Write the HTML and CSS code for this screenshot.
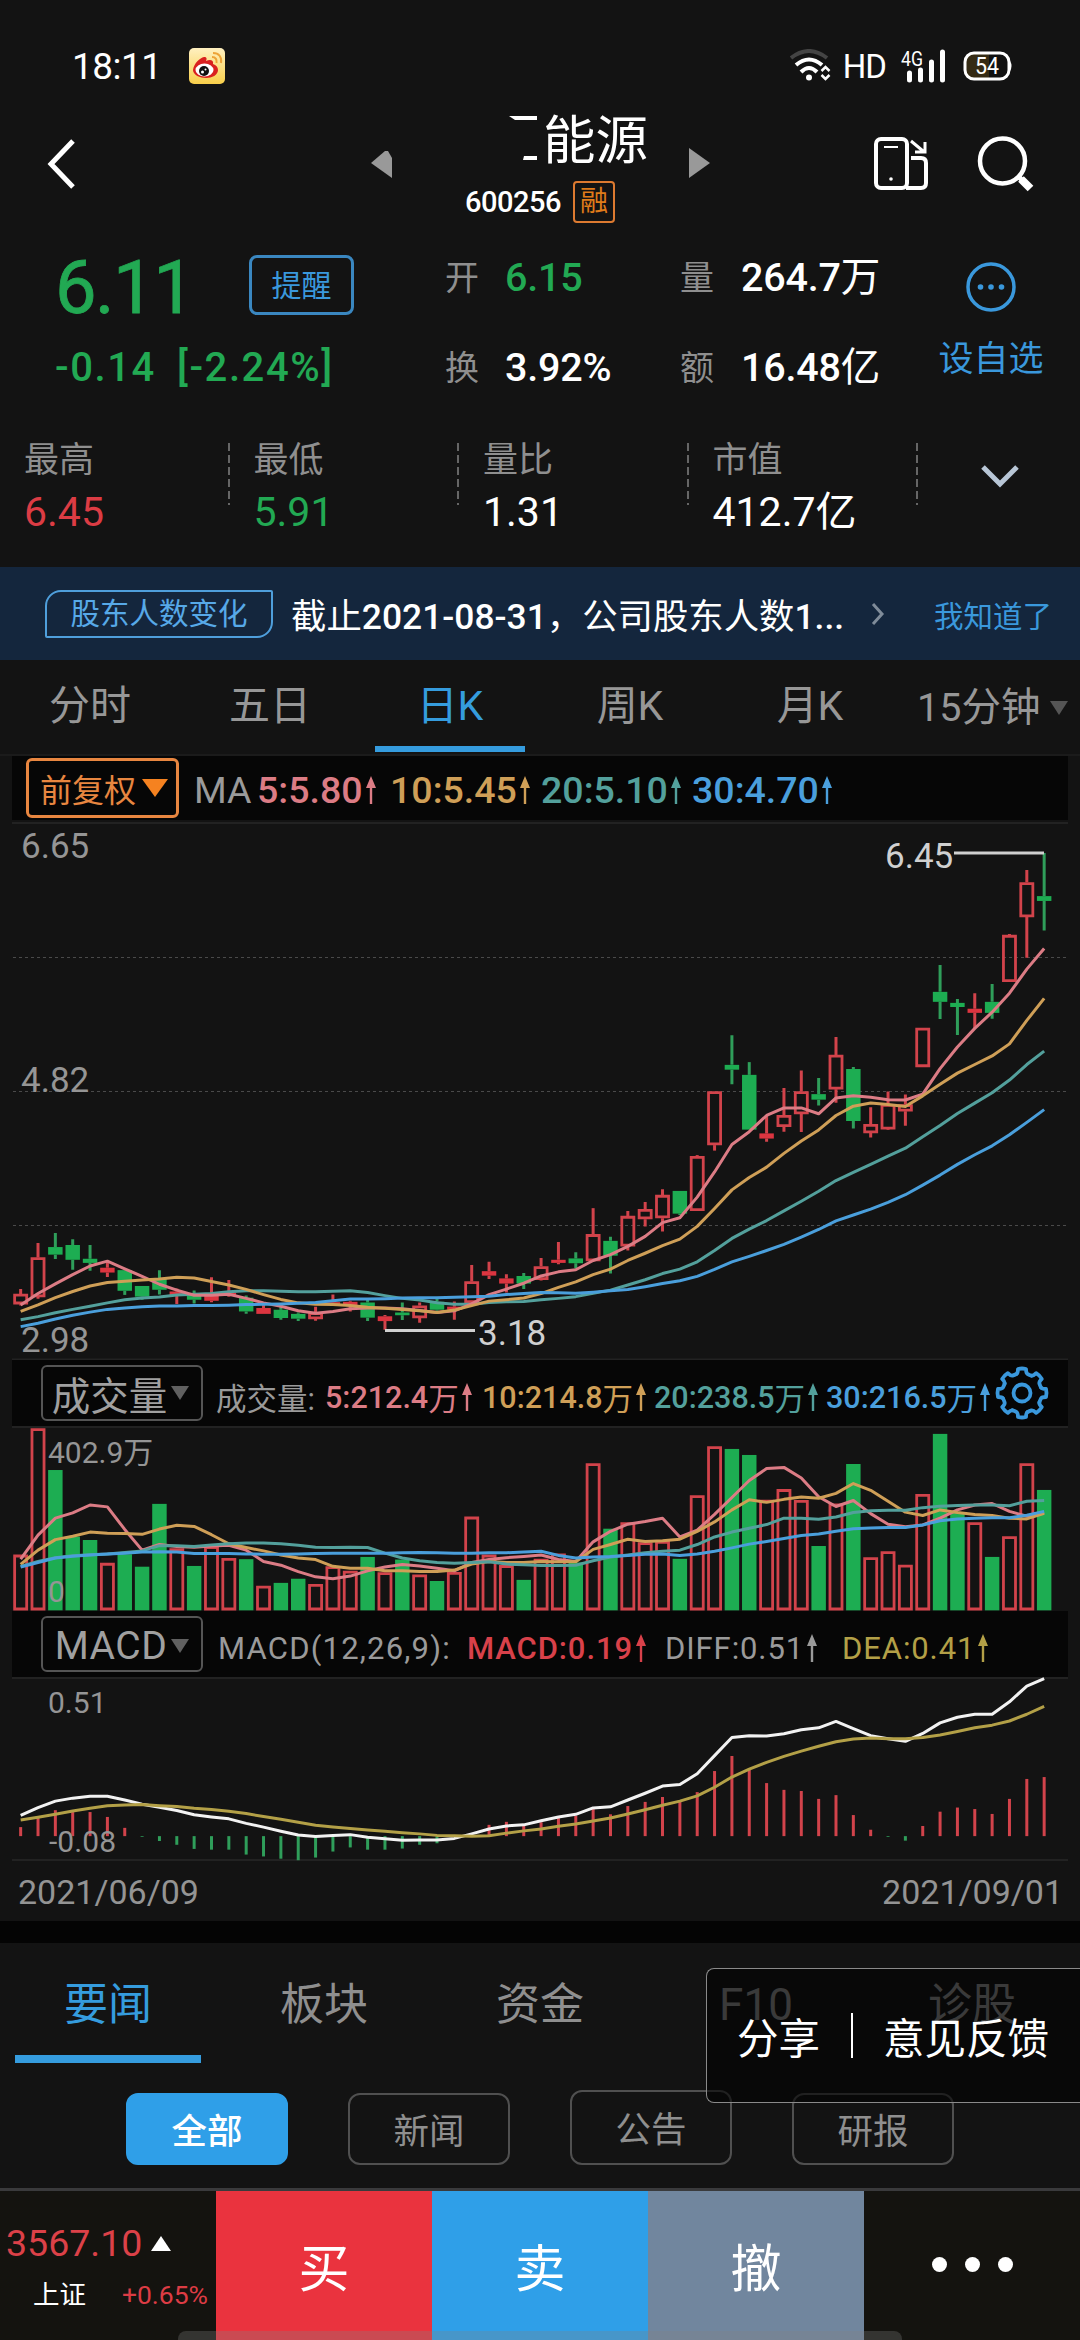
FILE: index.html
```html
<!DOCTYPE html>
<html lang="zh-CN">
<head>
  <meta charset="utf-8">
  <title>能源 600256</title>
  <link rel="stylesheet" href="styles.css">
</head>
<body>
  <div class="status">
    <span class="time">18:11</span>
    <svg class="weibo" width="36" height="36" viewBox="0 0 36 36">
      <defs><linearGradient id="wb" x1="0" y1="0" x2="0" y2="1"><stop offset="0" stop-color="#fff0c0"/><stop offset="1" stop-color="#f8cf4a"/></linearGradient></defs>
      <rect width="36" height="36" rx="5" fill="url(#wb)"/>
      <path d="M4 22C5 15 11 10 15 9c3 0 3 2 2 4 4-2 8-1 7 3 3 1 5 3 5 6 0 5-6 8-12 8S4 27 4 22z" fill="#d9201f"/>
      <ellipse cx="15.500" cy="22" rx="9" ry="6.500" fill="#fff"/>
      <circle cx="15" cy="23" r="5" fill="#111"/>
      <circle cx="13.500" cy="24" r="1.500" fill="#fff"/>
      <circle cx="16.500" cy="21.500" r="1" fill="#fff"/>
      <path d="M23 9c4 0 5 3 4.500 6M24 5c6 0 9 4 8 10" fill="none" stroke="#eda338" stroke-width="2"/>
    </svg>
    <span class="grow"></span>
    <svg width="42" height="34" viewBox="0 0 42 34" fill="none" stroke="#fff" stroke-width="4">
      <path d="M1 9Q19-5 37 9" stroke="#444"/>
      <path d="M6 16Q19 5 32 16M11 23Q19 15 27 23"/>
      <circle cx="19" cy="28.500" r="3" fill="#fff" stroke="none"/>
      <path d="M31.500 22l4-4 4 4M31.500 26l4 4 4-4" stroke-width="2.500"/>
    </svg>
    <span class="hd">HD</span>
    <svg class="signal" width="46" height="34" viewBox="0 0 46 34">
      <text x="0" y="17" class="net" textLength="22" lengthAdjust="spacingAndGlyphs">4G</text>
      <path d="M8.500 24v7M19.500 21v10M30.500 13v18M41.500 3v28" stroke="#fff" stroke-width="5" stroke-linecap="round"/>
    </svg>
    <svg class="battery" width="50" height="30" viewBox="0 0 50 30">
      <rect x="2" y="2" width="44" height="26" rx="9" fill="#111"/>
      <path d="M26 2H11a9 9 0 0 0-9 9v8a9 9 0 0 0 9 9h15z" fill="#352b14"/>
      <rect x="2" y="2" width="44" height="26" rx="9" fill="none" stroke="#fff" stroke-width="3"/>
      <path d="M47 10q3 5 0 10z" fill="#fff"/>
      <text x="24" y="23" text-anchor="middle" class="pct" textLength="24" lengthAdjust="spacingAndGlyphs">54</text>
    </svg>
  </div>

  <div class="header">
    <svg class="back" width="30" height="54" viewBox="0 0 30 54"><path d="M27 4L5 27l22 23" fill="none" stroke="#fff" stroke-width="5"/></svg>
    <svg class="prev" width="24" height="32" viewBox="0 0 24 32"><path d="M1 15L15 3l3 0 4 7v20z" fill="#999"/></svg>
    <div class="title">
      <div class="name">
        <svg width="30" height="52" viewBox="0 0 30 52"><path d="M0 5h28v4H6zM15 45h13v4H14z" fill="#fff"/></svg><span>能源</span>
      </div>
      <div class="code"><span>600256</span><i>融</i></div>
    </div>
    <svg class="next" width="24" height="32" viewBox="0 0 24 32"><path d="M1 1l21 15L1 31z" fill="#999"/></svg>
    <svg class="rotate" width="58" height="56" viewBox="0 0 58 56" fill="none" stroke="#fff" stroke-width="4">
      <rect x="4" y="3" width="31" height="49" rx="5"/>
      <path d="M12 11h14" stroke-width="2"/>
      <circle cx="19" cy="43" r="1.800" fill="#fff" stroke="none"/>
      <path d="M39 22h10q5 0 5 5v20q0 5-5 5H34"/>
      <path d="M39 5l12 10M53 6v10H43" stroke-width="3"/>
    </svg>
    <svg class="search" width="58" height="58" viewBox="0 0 58 58" fill="none" stroke="#fff">
      <circle cx="25.500" cy="25" r="22.500" stroke-width="4.500"/>
      <path d="M41 40l5 5" stroke-width="5"/>
      <path d="M44 43l9.500 9.500" stroke-width="8"/>
    </svg>
  </div>

  <div class="quote">
    <div class="price down">6.11</div>
    <div class="remind">提醒</div>
    <div class="label">开</div><div class="val down">6.15</div>
    <div class="label">量</div><div class="val">264.7<i>万</i></div>
    <div class="fav">
      <svg width="52" height="52" viewBox="0 0 52 52"><circle cx="26" cy="26" r="23" fill="none" stroke="#3a98dc" stroke-width="3.500"/><g fill="#3a98dc"><circle cx="15.500" cy="26" r="2.800"/><circle cx="26" cy="26" r="2.800"/><circle cx="36.500" cy="26" r="2.800"/></g></svg>
      <span>设自选</span>
    </div>
    <div class="change down"><span>-0.14</span><span>[-2.24%]</span></div>
    <div class="label">换</div><div class="val">3.92%</div>
    <div class="label">额</div><div class="val">16.48<i>亿</i></div>
  </div>

  <div class="stats">
    <div class="stat"><span>最高</span><b class="up">6.45</b></div>
    <div class="stat"><span>最低</span><b class="down">5.91</b></div>
    <div class="stat"><span>量比</span><b>1.31</b></div>
    <div class="stat"><span>市值</span><b>412.7亿</b></div>
    <div class="stat more"><svg width="42" height="28" viewBox="0 0 42 28"><path d="M4 4l17 17L38 4" fill="none" stroke="#b8c6d6" stroke-width="5"/></svg></div>
  </div>

  <div class="notice">
    <span class="tag">股东人数变化</span>
    <span class="msg">截止<u>2021-08-31</u>，公司股东人数<u>1...</u></span>
    <svg width="16" height="24" viewBox="0 0 16 24"><path d="M3 2l9 10-9 10" fill="none" stroke="#7f8b99" stroke-width="3"/></svg>
    <span class="know">我知道了</span>
  </div>

  <div class="periods">
    <div>分时</div><div>五日</div><div class="on">日K</div><div>周K</div><div>月K</div>
    <div class="last">15分钟<svg width="18" height="14" viewBox="0 0 18 14"><path d="M0 0h18l-9 14z" fill="#555"/></svg></div>
  </div>

  <div class="chart">
    <div class="bar ma">
      <span class="fq">前复权<svg width="26" height="18" viewBox="0 0 26 18"><path d="M0 0h26L13 18z" fill="#f58220"/></svg></span>
      <span class="g">MA</span>
      <span class="m5">5:5.80<svg class="arr"><use href="#arrow"/></svg></span>
      <span class="m10">10:5.45<svg class="arr"><use href="#arrow"/></svg></span>
      <span class="m20">20:5.10<svg class="arr"><use href="#arrow"/></svg></span>
      <span class="m30">30:4.70<svg class="arr"><use href="#arrow"/></svg></span>
    </div>
    <svg id="kline" width="1080" height="540" viewBox="0 0 1080 540">
      <path class="frame" d="M12 3h1056M12 539.500h1056"/>
      <path class="grid" d="M13 137.500h1053M13 271.500h1053M13 405.500h1053"/>
      <g class="plot" transform="scale(.3444)"></g>
      <path d="M954 33h90M385 510.500h90" stroke="#d0d0d0" stroke-width="3"/>
      <g class="axis">
        <text x="21" y="38">6.65</text>
        <text x="21" y="272">4.82</text>
        <text x="21" y="532">2.98</text>
        <text x="885" y="48" class="mark">6.45</text>
        <text x="478" y="525" class="mark">3.18</text>
      </g>
    </svg>

    <div class="bar vol">
      <span class="sel">成交量<svg width="18" height="14" viewBox="0 0 18 14"><path d="M0 0h18L9 14z" fill="#606060"/></svg></span>
      <span class="g">成交量:</span>
      <span class="m5">5:212.4<i>万</i><svg class="arr"><use href="#arrow"/></svg></span>
      <span class="m10">10:214.8<i>万</i><svg class="arr"><use href="#arrow"/></svg></span>
      <span class="m20">20:238.5<i>万</i><svg class="arr"><use href="#arrow"/></svg></span>
      <span class="m30">30:216.5<i>万</i><svg class="arr"><use href="#arrow"/></svg></span>
      <svg class="gear" width="56" height="56" viewBox="-28 -28 56 56" fill="none" stroke="#3a98dc" stroke-width="3.800" stroke-linejoin="round" stroke-linecap="round">
        <defs><path id="tooth" d="M19 -5.500Q20 -4 24 -4Q25 0 24 4Q20 4 19 5.500Q18 7.500 17.300 9.500"/></defs>
        <use href="#tooth"/><use href="#tooth" transform="rotate(45)"/><use href="#tooth" transform="rotate(90)"/><use href="#tooth" transform="rotate(135)"/>
        <use href="#tooth" transform="rotate(180)"/><use href="#tooth" transform="rotate(225)"/><use href="#tooth" transform="rotate(270)"/><use href="#tooth" transform="rotate(315)"/>
        <circle r="8.500"/>
      </svg>
    </div>
    <svg id="volume" width="1080" height="185" viewBox="0 0 1080 185">
      <path class="frame" d="M12 1h1056"/>
      <g class="plot" transform="scale(.3444 .3762) translate(0 -205)"></g>
      <g class="axis small">
        <text x="48" y="37">402.9万</text>
        <text x="48" y="176">0</text>
      </g>
    </svg>

    <div class="bar macd">
      <span class="sel">MACD<svg width="18" height="14" viewBox="0 0 18 14"><path d="M0 0h18L9 14z" fill="#606060"/></svg></span>
      <span class="g">MACD(12,26,9):</span>
      <span class="r">MACD:0.19<svg class="arr"><use href="#arrow"/></svg></span>
      <span class="g">DIFF:0.51<svg class="arr"><use href="#arrow"/></svg></span>
      <span class="y">DEA:0.41<svg class="arr"><use href="#arrow"/></svg></span>
    </div>
    <svg id="macd" width="1080" height="184" viewBox="0 0 1080 184">
      <path class="frame" d="M12 1h1056M12 183h1056"/>
      <g class="plot" transform="scale(.3444 .3762) translate(0 -869)"></g>
      <g class="axis small">
        <text x="48" y="36">0.51</text>
        <text x="49" y="175" textLength="67">-0.08</text>
      </g>
    </svg>
    <div class="dates"><span>2021/06/09</span><span>2021/09/01</span></div>
  </div>

  <div class="news">
    <div class="tabs"><div class="on">要闻</div><div>板块</div><div>资金</div><div>F10</div><div>诊股</div></div>
    <div class="pills"><span class="on">全部</span><span>新闻</span><span class="tall">公告</span><span>研报</span></div>
    <div class="share"><span>分享</span><em></em><span>意见反馈</span></div>
  </div>

  <div class="footer">
    <div class="index">
      <div class="num">3567.10<svg width="20" height="15" viewBox="0 0 20 15"><path d="M10 0l10 15H0z" fill="#fff"/></svg></div>
      <div class="sub"><span>上证</span><span class="up">+0.65%</span></div>
    </div>
    <div class="buy">买</div>
    <div class="sell">卖</div>
    <div class="cancel">撤</div>
    <div class="dots"><i></i><i></i><i></i></div>
    <div class="home"></div>
  </div>

  <svg width="0" height="0" class="defs">
    <symbol id="arrow" viewBox="0 0 10 28"><path d="M5 0l5 12H6.200v16H3.800V12H0z" fill="currentColor"/></symbol>
  </svg>
  <script src="app.js"></script>
</body>
</html>
```

FILE: styles.css
```css
* {
  box-sizing: border-box;
  margin: 0;
  padding: 0;
}
body {
  width: 1080px;
  height: 2340px;
  overflow: hidden;
  background: #131313;
  color: #fff;
  font-family: Roboto, "Noto Sans CJK SC", sans-serif;
  font-size: 34px;
}
svg {
  display: block;
  flex: none;
}
i, em {
  font-style: normal;
  font-weight: 400;
}
u {
  text-decoration: none;
  font-weight: 500;
}
.up { color: #dc3c44; }
.down { color: #22a953; }
.grow { flex: 1; }
.defs { display: none; }

/* status bar */
.status {
  display: flex;
  align-items: center;
  height: 100px;
  padding: 32px 67px 0 72px;
}
.time {
  font-size: 37px;
  letter-spacing: -0.5px;
  width: 117px;
}
.hd {
  font-size: 33px;
  margin: 0 15px 0 11px;
  letter-spacing: -1px;
}
.signal { overflow: visible; }
.net {
  font-size: 20px;
  fill: #fff;
}
.battery { margin-left: 16px; }
.pct {
  font-size: 24px;
  fill: #fff;
}

/* title row */
.header {
  display: flex;
  height: 132px;
  padding-left: 46px;
}
.back { margin: 37px 0 0; }
.prev { margin: 48px 0 0 294px; }
.title {
  width: 294px;
}
.name {
  display: flex;
  justify-content: flex-end;
  height: 78px;
  padding: 11px 40px 0 0;
  font-size: 52.500px;
  line-height: 60px;
  gap: 4px;
}
.code {
  display: flex;
  align-items: center;
  gap: 11px;
  padding-left: 71px;
  height: 47px;
  font-size: 29px;
  font-weight: 500;
}
.code span {
  width: 97px;
  letter-spacing: -0.5px;
}
.code i {
  width: 42px;
  height: 42px;
  border: 2px solid #dd7a30;
  border-radius: 4px;
  color: #e07c1a;
  font-size: 28px;
  line-height: 38px;
  text-align: center;
}
.next { margin: 47px 0 0; }
.rotate { margin: 36px 0 0 160px; }
.search { margin: 36px 0 0 47px; }

/* quote */
.quote {
  display: grid;
  grid-template-columns: 194px 196px 60px 175px 61px 189px 122px;
  grid-template-rows: 90px 90px;
  padding-left: 55px;
  line-height: 92px;
}
.price {
  font-size: 74px;
  line-height: 112px;
  letter-spacing: -1.500px;
  -webkit-text-stroke: 0.8px #22a953;
}
.remind {
  width: 105px;
  height: 60px;
  margin-top: 23px;
  border: 3px solid #3a87c0;
  border-radius: 8px;
  color: #3a98dc;
  font-size: 30px;
  line-height: 55px;
  text-align: center;
}
.label {
  color: #8f8f8f;
  font-size: 34px;
}
.val {
  font-size: 39.500px;
  font-weight: 500;
  letter-spacing: -0.2px;
  white-space: nowrap;
}
.fav {
  grid-column: 7;
  grid-row: 1 / 3;
  display: flex;
  flex-direction: column;
  align-items: center;
  padding-top: 29px;
  color: #3a98dc;
  font-size: 35px;
  line-height: 94px;
}
.change {
  grid-column: 1 / 3;
  display: flex;
  gap: 21px;
  font-size: 40px;
  font-weight: 500;
  letter-spacing: 1.600px;
  white-space: nowrap;
}
.stats {
  display: flex;
  height: 155px;
  margin-left: -2px;
}
.stat {
  width: 229.500px;
  height: 130px;
  padding: 27px 0 0 26px;
}
.stat + .stat {
  background: repeating-linear-gradient(#666 0 8px, transparent 8px 12px) 0 31px / 2px 62px no-repeat;
}
.stat span {
  display: block;
  color: #8f8f8f;
  font-size: 35px;
  line-height: 44px;
}
.stat b {
  display: block;
  font-size: 41px;
  font-weight: 400;
  line-height: 59px;
}
.stats .more {
  width: 162px;
  padding: 51px 0 0 63px;
}

/* notice */
.notice {
  display: flex;
  align-items: center;
  height: 93px;
  padding-left: 45px;
  background: #14263d;
  white-space: nowrap;
}
.tag {
  width: 228px;
  height: 48px;
  border: 2px solid #4f9fdc;
  border-radius: 16px 2px 16px 2px;
  color: #57a9e8;
  font-size: 29.500px;
  line-height: 45px;
  text-align: center;
}
.msg {
  width: 577px;
  padding-left: 18px;
  font-size: 35.400px;
}
.notice svg { margin-left: 20px; }
.know {
  margin-left: 48px;
  color: #3a98dc;
  font-size: 29.500px;
}

/* period tabs */
.periods {
  display: grid;
  grid-template-columns: repeat(6, 180px);
  height: 96px;
  border-bottom: 2px solid #1b1b1b;
  color: #979797;
  font-size: 41px;
  line-height: 92px;
  text-align: center;
}
.periods .on {
  width: 150px;
  height: 92px;
  margin: 0 auto;
  border-bottom: 6px solid #359cde;
  color: #359cde;
}
.periods .last {
  display: flex;
  align-items: center;
  gap: 10px;
  padding-left: 17px;
  height: 96px;
  font-size: 39.500px;
  white-space: nowrap;
}

/* chart */
.bar {
  display: flex;
  align-items: center;
  height: 66px;
  margin: 0 12px;
  background: #060606;
  white-space: nowrap;
}
.bar span {
  display: flex;
  align-items: center;
}
.arr {
  width: 10px;
  height: 28px;
  margin-left: 3px;
}
.g { color: #9a9a9a; }
.r { color: #d8414a; }
.y { color: #b3a047; }
.m5 { color: #dc7c85; }
.m10 { color: #cf9f57; }
.m20 { color: #53a09c; }
.m30 { color: #4a9fdc; }
.m5, .m10, .m20, .m30, .r { font-weight: 500; }
.ma {
  height: 64px;
  padding-left: 14px;
  font-size: 37.500px;
}
.ma > span { padding-top: 4px; }
.ma .fq {
  width: 153px;
  height: 60px;
  padding: 0 0 0 11px;
  gap: 6px;
  border: 3px solid #e88640;
  border-radius: 6px;
  color: #e88640;
  font-size: 32px;
  margin-right: 15px;
}
.ma .g { width: 63px; }
.ma .m5 { width: 133px; }
.ma .m10, .ma .m20 { width: 151px; }
.sel {
  justify-content: center;
  width: 162px;
  height: 56px;
  margin: 0 13px 0 29px;
  border: 2px solid #555;
  border-radius: 6px;
  color: #a0a0a0;
  font-size: 39px;
  gap: 4px;
}
.vol, .macd { font-size: 30.500px; }
.vol > span:not(.sel), .macd > span:not(.sel) { padding-top: 8px; }
.vol .g { width: 109px; }
.vol .m5 { width: 157px; }
.vol .m10, .vol .m20 { width: 172px; }
.vol .m30 { width: 168px; }
.vol .sel {
  font-size: 38.500px;
  padding-right: 3px;
}
.macd {
  font-size: 31px;
  letter-spacing: 0.6px;
}
.macd .sel {
  margin-right: 15px;
  padding-top: 3px;
  letter-spacing: 0.5px;
}
.macd .sel + .g {
  width: 249px;
  letter-spacing: 1.200px;
}
.macd .r {
  width: 198px;
  letter-spacing: 0.9px;
}
.macd .r + .g { width: 177px; }
.macd .g, .macd .y { letter-spacing: 0.9px; }
.frame {
  stroke: #222;
  stroke-width: 2;
}
.grid {
  stroke: #4a4a4a;
  stroke-width: 1.200;
  stroke-dasharray: 3 3;
}
.axis {
  fill: #959595;
  font-size: 35px;
}
.axis.small { font-size: 30px; }
.axis .mark { fill: #d0d0d0; }
.plot * { vector-effect: non-scaling-stroke; }
.plot .rise {
  fill: none;
  stroke: #d2434b;
  stroke-width: 2.800;
}
.plot .solid { fill: #dc3540; }
.plot .fall {
  fill: #1dad52;
  stroke: none;
}
.wick {
  fill: none;
  stroke-width: 3;
}
.wick.rise-w { stroke: #d2434b; }
.wick.fall-w { stroke: #2f9e5a; }
.line {
  fill: none;
  stroke-width: 3;
  stroke-linejoin: round;
}
.dates {
  display: flex;
  justify-content: space-between;
  height: 60px;
  padding: 0 17px 0 18px;
  color: #949494;
  font-size: 34px;
  line-height: 62px;
}

/* news */
.news {
  position: relative;
  height: 267px;
  border-top: 22px solid #040404;
}
.tabs {
  display: grid;
  grid-template-columns: repeat(5, 216px);
  height: 120px;
  color: #8f8f8f;
  font-size: 44px;
  line-height: 125px;
  text-align: center;
}
.tabs .on {
  width: 186px;
  height: 120px;
  margin: 0 auto;
  border-bottom: 8px solid #359cde;
  color: #359cde;
}
.pills {
  display: flex;
  align-items: flex-end;
  gap: 60px;
  height: 102px;
  padding-left: 126px;
}
.pills span {
  width: 162px;
  height: 72px;
  border: 2px solid #505050;
  border-radius: 12px;
  color: #8f8f8f;
  font-size: 35.500px;
  line-height: 74px;
  text-align: center;
}
.pills .tall {
  height: 75px;
  line-height: 77px;
}
.pills .on {
  border-color: #2f9fe8;
  background: #2f9fe8;
  color: #fff;
  font-weight: 500;
}
/* floating share box */
.share {
  position: absolute;
  right: 0;
  top: 25px;
  display: flex;
  align-items: center;
  width: 374px;
  height: 135px;
  padding-left: 30px;
  border: 1px solid #8a8a8a;
  border-right: 0;
  border-radius: 8px 0 0 8px;
  background: rgba(2, 2, 2, 0.6);
  font-size: 41.500px;
}
.share em {
  width: 2px;
  height: 45px;
  margin: 0 30px 0 31px;
  background: #fff;
}

/* bottom bar */
.footer {
  position: relative;
  display: grid;
  grid-template-columns: repeat(5, 216px);
  height: 152px;
  border-top: 3px solid #3a3a3c;
  background: #14130f;
  font-size: 51px;
  line-height: 157px;
  text-align: center;
}
.index {
  line-height: 52px;
  padding-top: 26px;
}
.num {
  display: flex;
  align-items: center;
  gap: 9px;
  padding-left: 6px;
  color: #dc4148;
  font-size: 37.500px;
}
.sub {
  display: flex;
  justify-content: space-between;
  padding: 0 8px 0 33px;
  font-size: 26.500px;
}
.buy { background: #ea333e; }
.sell { background: #2f9fe8; }
.cancel { background: #71869e; }
.dots {
  display: flex;
  justify-content: center;
  height: 149px;
  padding-top: 66px;
  gap: 18px;
}
.dots i {
  width: 15px;
  height: 15px;
  border-radius: 50%;
  background: #fff;
}
.home {
  position: absolute;
  left: 178px;
  bottom: 0;
  width: 724px;
  height: 9px;
  border-radius: 8px 8px 0 0;
  background: rgba(130, 130, 130, 0.3);
}
```

FILE: app.js
```js
const NS = "http://www.w3.org/2000/svg";
const x = i => 60 + i * 50.37;

// r = rise (hollow), s = rise (thin body), g = fall; then high, top, bottom, low
const candles = [
  ["r",1362,1376,1406,1410],["r",1228,1270,1385,1390],["g",1199,1240,1262,1275],["g",1217,1234,1277,1306],["g",1234,1274,1286,1309],
  ["s",1280,1300,1314,1327],["g",1307,1307,1367,1379],["g",1353,1353,1384,1393],["g",1307,1330,1364,1378],["s",1360,1369,1381,1405],
  ["g",1366,1378,1393,1404],["s",1328,1381,1396,1400],["s",1336,1373,1381,1384],["g",1381,1387,1427,1434],["s",1405,1417,1434,1434],
  ["g",1413,1422,1446,1451],["g",1430,1434,1448,1455],["r",1413,1430,1449,1454],["s",1378,1400,1407,1410],["s",1396,1399,1411,1427],
  ["g",1394,1401,1445,1455],["s",1437,1441,1455,1480],["g",1401,1430,1438,1452],["r",1401,1410,1446,1460],["g",1388,1399,1422,1425],
  ["s",1398,1413,1422,1451],["r",1292,1340,1402,1402],["s",1283,1310,1323,1333],["s",1319,1331,1346,1372],["g",1315,1324,1346,1362],
  ["r",1272,1296,1335,1337],["s",1225,1277,1286,1290],["g",1255,1273,1287,1302],["r",1127,1203,1281,1281],["g",1210,1222,1265,1317],
  ["r",1135,1150,1238,1250],["r",1109,1130,1159,1180],["r",1072,1089,1156,1195],["g",1077,1077,1143,1147],["r",973,976,1135,1135],
  ["r",788,788,944,960],["g",625,711,725,767],["g",703,740,899,899],["s",858,910,925,934],["r",778,857,891,905],
  ["r",727,788,854,906],["g",749,796,812,829],["r",630,682,782,821],["g",717,723,874,896],["r",834,883,909,922],
  ["r",788,825,898,900],["r",797,826,846,888],["r",604,604,717,717],["g",421,499,528,578],["g",520,531,543,624],
  ["s",503,548,560,605],["g",476,528,560,577],["r",331,334,470,470],["r",145,181,282,400],["g",96,221,235,321]
];
const vols = [
  547,211,322,499,508,569,546,579,412,530,577,525,556,559,630,622,611,625,578,590,
  553,594,560,600,617,593,446,547,575,614,558,544,568,304,478,461,514,511,558,389,
  259,266,282,401,373,402,524,411,306,554,538,574,386,226,436,461,553,498,304,375
];
const macdBars = [
  1268,1243,1223,1228,1228,1241,1270,1294,1305,1315,1326,1328,1328,1341,1346,1352,1356,1349,1333,1322,
  1328,1328,1325,1315,1311,1292,1292,1262,1254,1262,1255,1240,1238,1220,1234,1212,1201,1188,1200,1175,
  1119,1079,1115,1151,1169,1172,1193,1183,1236,1275,1294,1304,1265,1227,1216,1220,1233,1193,1140,1135
];

const priceMa = {
  "#53a09c": [1451,1442,1431,1421,1412,1402,1393,1388,1385,1379,1377,1375,1370,1367,1367,1368,1370,1370,1368,1367,1372,1381,1389,1394,1402,1406,1406,1401,1399,1398,1393,1389,1384,1374,1365,1350,1335,1317,1304,1283,1250,1215,1188,1163,1135,1107,1078,1047,1023,1000,976,953,920,887,852,822,792,755,710,671],
  "#dc7c85": [1408,1375,1347,1320,1295,1281,1303,1325,1348,1365,1380,1380,1377,1389,1402,1412,1425,1432,1427,1419,1417,1417,1419,1424,1430,1425,1405,1378,1362,1345,1324,1312,1306,1279,1262,1238,1209,1169,1155,1095,1022,942,905,858,836,836,853,807,801,805,812,813,796,722,659,605,558,503,433,373],
  "#cf9f57": [1427,1408,1387,1369,1353,1343,1339,1336,1333,1328,1330,1340,1350,1363,1378,1392,1402,1406,1407,1410,1415,1418,1421,1425,1430,1423,1410,1397,1393,1388,1375,1357,1341,1320,1304,1279,1258,1236,1217,1180,1128,1074,1038,1008,968,932,900,858,831,822,826,832,801,767,735,710,685,650,582,518],
  "#4a9fdc": [1471,1461,1449,1438,1429,1421,1417,1413,1411,1411,1410,1410,1409,1407,1406,1405,1403,1401,1396,1391,1391,1390,1388,1387,1387,1386,1384,1383,1378,1375,1372,1373,1374,1371,1367,1363,1355,1346,1338,1325,1305,1283,1267,1250,1232,1211,1189,1164,1147,1130,1110,1088,1060,1031,1000,972,946,914,878,841]
};
const volMa = {
  "#dc7c85": [559,495,450,436,415,420,480,535,520,525,527,524,522,535,565,575,592,606,611,604,590,580,573,577,583,590,568,560,555,552,548,560,565,513,485,466,459,450,500,482,440,395,350,318,315,343,393,419,403,438,466,473,468,450,428,415,411,432,445,435],
  "#cf9f57": [573,535,507,498,487,490,491,493,479,469,472,494,518,528,537,548,556,560,578,583,583,590,590,592,592,588,572,565,568,568,565,566,566,533,520,506,512,510,506,485,460,428,401,408,400,394,397,384,358,376,405,434,443,428,435,440,443,450,452,437],
  "#53a09c": [578,565,555,550,547,545,541,537,523,523,525,521,518,516,516,518,522,527,528,527,528,543,556,563,568,570,568,566,572,574,576,576,575,563,553,548,542,538,535,520,500,487,477,467,450,450,453,447,435,430,429,429,422,418,416,415,415,417,405,403],
  "#4a9fdc": [580,568,556,551,548,545,543,540,539,540,544,544,544,545,546,546,545,544,543,543,543,543,542,541,542,543,543,542,542,540,538,549,556,553,552,549,546,545,549,545,538,529,519,512,504,496,492,485,478,476,475,475,468,457,452,450,449,449,442,432]
};
const macdLines = {
  "#f2f2f2": [1237,1216,1199,1191,1186,1186,1196,1207,1215,1224,1235,1241,1246,1258,1268,1279,1289,1293,1290,1288,1295,1299,1303,1302,1302,1298,1286,1273,1265,1262,1251,1241,1234,1217,1214,1196,1178,1159,1155,1126,1078,1030,1025,1026,1020,1009,1004,987,1006,1025,1033,1040,1019,991,976,968,968,935,893,873],
  "#b3a047": [1249,1242,1234,1225,1218,1211,1209,1208,1211,1213,1218,1221,1226,1232,1240,1247,1255,1263,1268,1272,1276,1279,1283,1286,1290,1291,1292,1291,1284,1278,1273,1266,1260,1252,1244,1233,1222,1210,1199,1185,1162,1135,1114,1096,1080,1066,1053,1041,1034,1031,1033,1033,1030,1023,1014,1004,997,986,968,947]
};

function add(parent, tag, attrs) {
  const el = document.createElementNS(NS, tag);
  for (const k in attrs) el.setAttribute(k, attrs[k]);
  parent.appendChild(el);
}

function body(g, i, type, top, bottom) {
  if (type === "r") {
    add(g, "rect", { class: "rise", x: x(i) - 17.5, y: top + 3.5, width: 35, height: Math.max(bottom - top - 7, 2) });
  } else {
    add(g, "rect", { class: type === "g" ? "fall" : "solid", x: x(i) - 21, y: top, width: 42, height: bottom - top });
  }
}

function lines(g, set) {
  for (const color in set) {
    add(g, "polyline", { class: "line", stroke: color, points: set[color].map((v, i) => x(i) + "," + v).join(" ") });
  }
}

const k = document.querySelector("#kline .plot");
candles.forEach(([type, high, top, bottom, low], i) => {
  add(k, "path", { class: "wick " + (type === "g" ? "fall-w" : "rise-w"), d: `M${x(i)} ${high}V${top}M${x(i)} ${bottom}V${low}` });
  body(k, i, type, top, bottom);
});
lines(k, priceMa);

const v = document.querySelector("#volume .plot");
vols.forEach((top, i) => body(v, i, candles[i][0] === "g" ? "g" : "r", top, 695));
lines(v, volMa);

const m = document.querySelector("#macd .plot");
macdBars.forEach((y, i) => {
  add(m, "path", { class: "wick " + (y > 1292 ? "fall-w" : "rise-w"), d: `M${x(i)} 1292V${y}` });
});
lines(m, macdLines);
```
